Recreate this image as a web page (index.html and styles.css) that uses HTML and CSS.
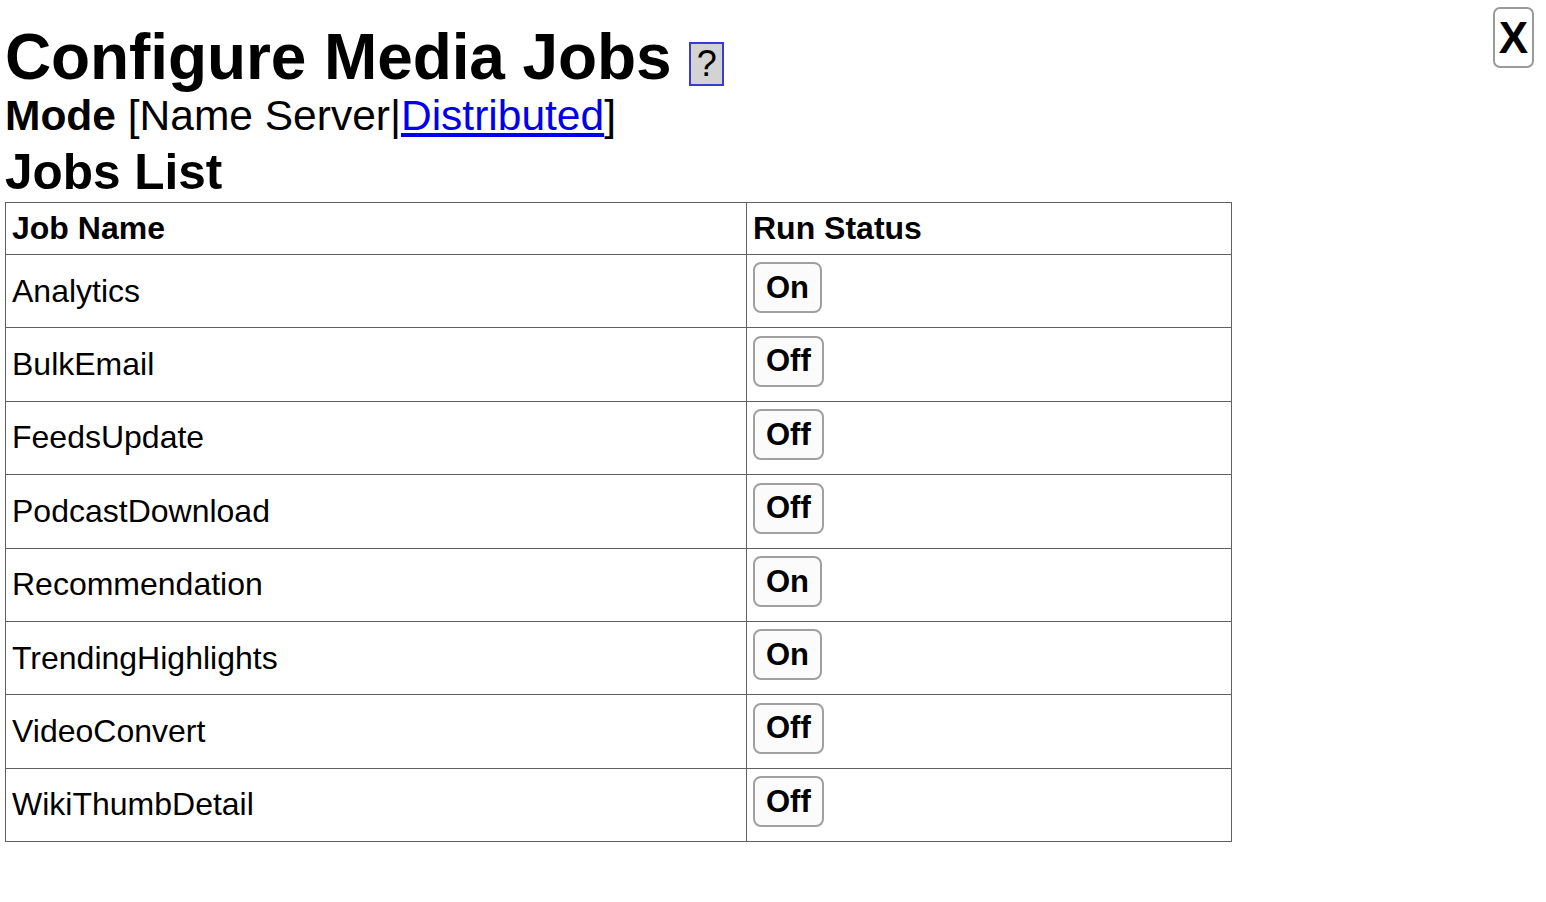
FILE: index.html
```html
<!DOCTYPE html>
<html>
<head>
<meta charset="utf-8">
<title>Configure Media Jobs</title>
<link rel="stylesheet" href="styles.css">
</head>
<body>
<div class="page">
  <button class="close-btn">X</button>
  <h1 class="title">Configure Media Jobs <span class="help">?</span></h1>
  <div class="mode"><b>Mode</b> [Name Server|<a href="#">Distributed</a>]</div>
  <h2 class="subtitle">Jobs List</h2>
  <table class="jobs">
    <thead>
      <tr><th class="col-name">Job Name</th><th class="col-status">Run Status</th></tr>
    </thead>
    <tbody>
      <tr><td>Analytics</td><td><button class="toggle">On</button></td></tr>
      <tr><td>BulkEmail</td><td><button class="toggle">Off</button></td></tr>
      <tr><td>FeedsUpdate</td><td><button class="toggle">Off</button></td></tr>
      <tr><td>PodcastDownload</td><td><button class="toggle">Off</button></td></tr>
      <tr><td>Recommendation</td><td><button class="toggle">On</button></td></tr>
      <tr><td>TrendingHighlights</td><td><button class="toggle">On</button></td></tr>
      <tr><td>VideoConvert</td><td><button class="toggle">Off</button></td></tr>
      <tr><td>WikiThumbDetail</td><td><button class="toggle">Off</button></td></tr>
    </tbody>
  </table>
</div>
</body>
</html>
```
FILE: styles.css
```css
html, body {
  margin: 0;
  padding: 0;
  background: #ffffff;
}
body {
  font-family: "Liberation Sans", Arial, sans-serif;
  color: #000;
}
.page {
  position: relative;
  padding: 0 5px;
}
.close-btn {
  position: absolute;
  top: 7px;
  right: 12px;
  width: 41px;
  height: 61px;
  padding: 0;
  border: 2px solid #9a9a9a;
  border-radius: 7px;
  background: #fff;
  font-family: "Liberation Sans", Arial, sans-serif;
  font-weight: bold;
  font-size: 44px;
  line-height: 1;
  color: #000;
}
.title {
  margin: 0;
  padding-top: 20px;
  font-size: 64px;
  font-weight: bold;
  line-height: 74px;
  letter-spacing: -0.1px;
}
.help {
  display: inline-block;
  box-sizing: border-box;
  width: 35px;
  height: 44px;
  border: 2px solid #3a3ad4;
  background: #d3d3d3;
  font-size: 36px;
  font-weight: normal;
  line-height: 40px;
  text-align: center;
  vertical-align: 3px;
  margin-left: 0;
  letter-spacing: 0;
}
.mode {
  font-size: 42.5px;
  line-height: 48px;
  margin-top: -2px;
}
.mode a {
  color: #0000ee;
  text-decoration: underline;
}
.subtitle {
  margin: 0;
  font-size: 49.5px;
  font-weight: bold;
  line-height: 54px;
  margin-top: 5px;
}
.jobs {
  border-collapse: collapse;
  width: 1227px;
  margin-top: 3px;
}
.jobs th, .jobs td {
  border: 1px solid #606060;
  text-align: left;
  font-size: 32px;
  padding: 0 6px;
}
.jobs th {
  height: 51px;
  font-weight: bold;
  vertical-align: middle;
}
.col-name { width: 728px; }
.jobs td {
  height: 72.4px;
  vertical-align: middle;
}
.toggle {
  box-sizing: border-box;
  height: 51px;
  padding: 0 11px;
  border: 2px solid #a0a0a0;
  border-radius: 8px;
  background: #fbfbfb;
  font-family: "Liberation Sans", Arial, sans-serif;
  font-size: 31px;
  font-weight: bold;
  color: #000;
  margin-top: -8px;
}
```
